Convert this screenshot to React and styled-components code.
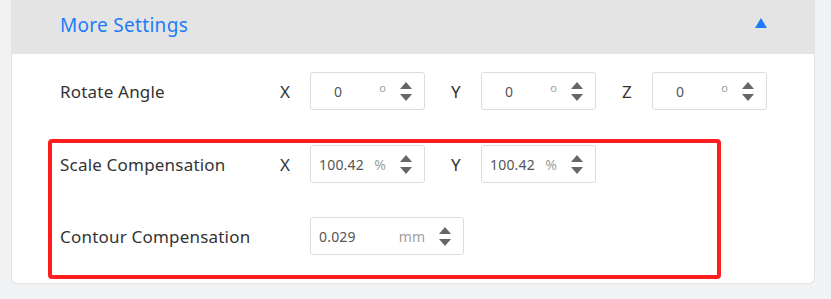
import React from 'react';
import styled, { createGlobalStyle } from 'styled-components';

const GlobalStyle = createGlobalStyle`
    body {
        margin: 0;
        background: #f1f2f4;
        font-family: "Noto Sans", "Open Sans", sans-serif;
    }
`;

const Page = styled.div`
    padding: 0 16px 15px 11px;
`;

const Card = styled.div`
    background: #fff;
    border: 1px solid #e2e3e5;
    border-top: none;
    border-radius: 0 0 6px 6px;
    overflow: hidden;
`;

const Header = styled.div`
    height: 54px;
    background: #e4e4e4;
    display: flex;
    align-items: center;
    justify-content: space-between;
    padding: 0 47px 0 48px;
`;

const Title = styled.div`
    font-size: 19px;
    letter-spacing: 0.3px;
    color: #1c7cf9;
    margin-top: -4px;
`;

const Caret = styled.span`
    width: 0;
    height: 0;
    border-left: 6px solid transparent;
    border-right: 6px solid transparent;
    border-bottom: 10px solid #1c7cf9;
    margin-top: -8px;
`;

const Body = styled.div`
    display: flex;
    flex-direction: column;
    gap: 35px;
    padding: 18px 0 28px 48px;
`;

const Highlight = styled.div`
    position: relative;
    display: flex;
    flex-direction: column;
    gap: 34px;

    &::before {
        content: '';
        position: absolute;
        left: -12px;
        top: -6px;
        width: 673px;
        height: 140px;
        box-sizing: border-box;
        border: 4px solid #ff1d1d;
        border-radius: 4px;
        pointer-events: none;
    }
`;

const Row = styled.div`
    display: flex;
    align-items: center;
    gap: 26px;
    height: 38px;
`;

const Label = styled.div`
    width: 220px;
    margin-right: -26px;
    font-size: 17px;
    letter-spacing: 0.2px;
    color: #333;
`;

const Group = styled.div`
    display: flex;
    align-items: center;
`;

const Axis = styled.span`
    width: 30px;
    font-size: 17px;
    color: #333;
`;

const Field = styled.div`
    box-sizing: border-box;
    width: ${p => p.$width}px;
    height: 38px;
    border: 1px solid #dcdcdc;
    border-radius: 3px;
    display: flex;
    align-items: center;
    padding: 0 12px 0 ${p => p.$pad}px;
`;

const Value = styled.span`
    flex: 1;
    font-size: 14px;
    letter-spacing: 0.2px;
    color: #555;
`;

const Unit = styled.span`
    font-size: 14px;
    color: #a0a0a0;
    margin-right: 14px;
    ${p => p.$sup && 'font-size: 11px; margin-top: -8px;'}
`;

const Spinner = styled.span`
    display: flex;
    flex-direction: column;
    gap: 5px;
    width: 12px;
`;

const Arrow = styled.span`
    width: 0;
    height: 0;
    border-left: 6px solid transparent;
    border-right: 6px solid transparent;
    ${p => p.$down ? 'border-top: 7px solid #666;' : 'border-bottom: 7px solid #666;'}
`;

const NumberInput = ({ value, unit, width = 115, pad = 8 }) => (
    <Field $width={width} $pad={pad}>
        <Value>{value}</Value>
        <Unit $sup={unit === '°'}>{unit === '°' ? 'o' : unit}</Unit>
        <Spinner>
            <Arrow />
            <Arrow $down />
        </Spinner>
    </Field>
);

const App = () => {
    return (
        <Page>
            <GlobalStyle />
            <Card>
                <Header>
                    <Title>More Settings</Title>
                    <Caret />
                </Header>
                <Body>
                    <Row>
                        <Label>Rotate Angle</Label>
                        {['X', 'Y', 'Z'].map(a => (
                            <Group key={a}>
                                <Axis>{a}</Axis>
                                <NumberInput value="0" unit="°" pad={23} />
                            </Group>
                        ))}
                    </Row>
                    <Highlight>
                        <Row>
                            <Label>Scale Compensation</Label>
                            {['X', 'Y'].map(a => (
                                <Group key={a}>
                                    <Axis>{a}</Axis>
                                    <NumberInput value="100.42" unit="%" />
                                </Group>
                            ))}
                        </Row>
                        <Row>
                            <Label>Contour Compensation</Label>
                            <Group>
                                <Axis />
                                <NumberInput value="0.029" unit="mm" width={154} />
                            </Group>
                        </Row>
                    </Highlight>
                </Body>
            </Card>
        </Page>
    );
};

export default App;
